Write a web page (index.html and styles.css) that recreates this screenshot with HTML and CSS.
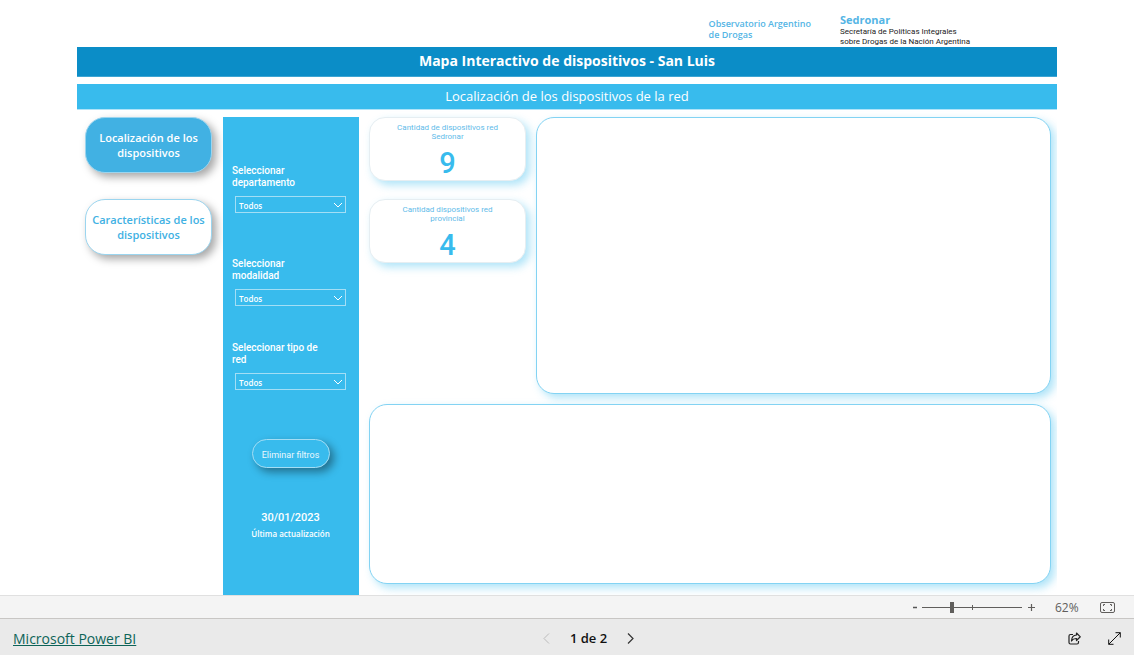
FILE: index.html
```html
<!DOCTYPE html>
<html lang="es">
<head>
<meta charset="utf-8">
<meta name="viewport" content="width=device-width, initial-scale=1">
<title>Mapa Interactivo de dispositivos - San Luis</title>
<link rel="stylesheet" href="styles.css">
</head>
<body>
<main class="report">
  <header class="brands">
    <p class="brand-oad">Observatorio Argentino<br>de Drogas</p>
    <div class="brand-sedronar">
      <p class="brand-name">Sedronar</p>
      <p class="brand-text">Secretaría de Políticas Integrales<br>sobre Drogas de la Nación Argentina</p>
    </div>
  </header>
  <h1 class="title">Mapa Interactivo de dispositivos - San Luis</h1>
  <h2 class="subtitle">Localización de los dispositivos de la red</h2>
  <div class="content">
    <nav class="tabs">
      <button class="tab tab-active" type="button">Localización de los dispositivos</button>
      <button class="tab" type="button">Características de los dispositivos</button>
    </nav>
    <aside class="filters">
      <div class="filter filter-wide">
        <label class="filter-label" for="departamento">Seleccionar departamento</label>
        <div class="dropdown">
          <select class="dropdown-select" id="departamento"><option>Todos</option></select>
          <svg class="dropdown-arrow" viewBox="0 0 10 6" aria-hidden="true"><path d="M1 1l4 4 4-4"/></svg>
        </div>
      </div>
      <div class="filter">
        <label class="filter-label" for="modalidad">Seleccionar modalidad</label>
        <div class="dropdown">
          <select class="dropdown-select" id="modalidad"><option>Todos</option></select>
          <svg class="dropdown-arrow" viewBox="0 0 10 6" aria-hidden="true"><path d="M1 1l4 4 4-4"/></svg>
        </div>
      </div>
      <div class="filter">
        <label class="filter-label" for="red">Seleccionar tipo de red</label>
        <div class="dropdown">
          <select class="dropdown-select" id="red"><option>Todos</option></select>
          <svg class="dropdown-arrow" viewBox="0 0 10 6" aria-hidden="true"><path d="M1 1l4 4 4-4"/></svg>
        </div>
      </div>
      <button class="clear" type="button">Eliminar filtros</button>
      <p class="date">30/01/2023</p>
      <p class="date-label">Última actualización</p>
    </aside>
    <div class="panels">
      <section class="stats">
        <div class="stat">
          <h3 class="stat-label">Cantidad de dispositivos red Sedronar</h3>
          <p class="stat-value">9</p>
        </div>
        <div class="stat">
          <h3 class="stat-label">Cantidad dispositivos red provincial</h3>
          <p class="stat-value">4</p>
        </div>
      </section>
      <section class="panel" aria-label="Mapa"></section>
      <section class="panel panel-table" aria-label="Tabla"></section>
    </div>
  </div>
</main>
<div class="zoombar">
  <button class="zoom-step" type="button" aria-label="Alejar"><svg width="6" height="9" viewBox="0 0 6 9"><path d="M1 4.500h4" stroke="#555" stroke-width="1.500"/></svg></button>
  <input class="zoom-range" type="range" min="10" max="190" value="62" aria-label="Zoom">
  <button class="zoom-step" type="button" aria-label="Acercar"><svg width="9" height="9" viewBox="0 0 9 9"><path d="M1 4.500h7M4.500 1v7" stroke="#605e5c" stroke-width="1.200"/></svg></button>
  <span class="zoom-value">62%</span>
  <button class="icon-button" type="button" aria-label="Ajustar a la página">
    <svg width="15" height="11" viewBox="0 0 15 11" fill="none" stroke="#605e5c"><rect x=".5" y=".5" width="14" height="10" rx="1.500"/><path d="M5 2.500H3.500V4M10 2.500h1.500V4M5 8.500H3.500V7M10 8.500h1.500V7"/></svg>
  </button>
</div>
<footer class="footer">
  <a class="footer-link" href="#">Microsoft Power BI</a>
  <div class="pager">
    <button class="icon-button" type="button" aria-label="Página anterior" disabled><svg width="7" height="11" viewBox="0 0 7 11" fill="none" stroke="#bbb"><path d="M6 .5l-5 5 5 5"/></svg></button>
    <span class="pager-text">1 de 2</span>
    <button class="icon-button" type="button" aria-label="Página siguiente"><svg width="7" height="11" viewBox="0 0 7 11" fill="none" stroke="#333" stroke-width="1.200"><path d="M1 .5l5 5-5 5"/></svg></button>
  </div>
  <div class="actions">
    <button class="icon-button" type="button" aria-label="Compartir"><svg width="13" height="13" viewBox="0 0 13 13" fill="none" stroke="#222" stroke-width="1.200" stroke-linejoin="round"><path d="M5 2.500H2.500a1.500 1.500 0 0 0-1.500 1.500v6.500A1.500 1.500 0 0 0 2.500 12H9a1.500 1.500 0 0 0 1.500-1.500V9"/><path d="M8.500 1L12.300 4.800 8.500 8.500V6.500C6 6.300 4.600 7.300 3.500 9 3.600 5.500 5.300 3.200 8.500 3z"/></svg></button>
    <button class="icon-button" type="button" aria-label="Pantalla completa"><svg width="13" height="13" viewBox="0 0 13 13" fill="none" stroke="#111"><path d="M.7 12.300L12.300.7M7.500.7h4.800v4.800M.7 7.500v4.800h4.800"/></svg></button>
  </div>
</footer>
</body>
</html>
```
FILE: styles.css
```css
* { box-sizing: border-box; }

body {
  margin: 0;
  min-height: 100vh;
  display: flex;
  flex-direction: column;
  background: #fff;
  font-family: "Open Sans", "Noto Sans", sans-serif;
}

h1, h2, h3, p { margin: 0; }

button {
  font-family: inherit;
  cursor: pointer;
}

.report {
  flex: 1;
  display: flex;
  flex-direction: column;
  width: 100%;
  max-width: 980px;
  margin: 0 auto;
  overflow: hidden;
}

.brands {
  display: flex;
  justify-content: flex-end;
  gap: 29px;
  height: 47px;
  padding: 12px 87px 0 0;
}

.brand-oad {
  padding-top: 6px;
  color: #54b5e5;
  font: 600 9px/11px "Open Sans", sans-serif;
}

.brand-name {
  color: #54b5e5;
  font-size: 11px;
  font-weight: 700;
  line-height: 15px;
}

.brand-text {
  color: #222;
  font: 400 8px/10px Roboto, sans-serif;
}

.title {
  height: 30px;
  background: #0b8dc7;
  border-bottom: 1px solid #3da5d3;
  color: #fff;
  font-size: 14px;
  font-weight: 700;
  line-height: 28px;
  text-align: center;
}

.subtitle {
  height: 26px;
  margin-top: 7px;
  background: #38bbed;
  border-bottom: 1px solid #b0e3f8;
  color: #fff;
  font-size: 13px;
  font-weight: 400;
  line-height: 25px;
  text-align: center;
}

.content {
  flex: 1;
  display: grid;
  grid-template-columns: 128px 136px minmax(0, 1fr);
  gap: 10px;
  padding: 7px 6px 0 8px;
}

.tabs {
  display: flex;
  flex-direction: column;
  gap: 26px;
  padding-right: 1px;
}

.tab {
  height: 56px;
  padding: 0 5px;
  border: 1px solid #9bd5ef;
  border-radius: 20px;
  background: #fff;
  box-shadow: 4px 4px 8px rgba(0, 0, 0, .35);
  color: #41b1e3;
  font-size: 11px;
  font-weight: 600;
  line-height: 15px;
}

.tab-active {
  background: #41b1e3;
  color: #fff;
}

.filters {
  display: flex;
  flex-direction: column;
  padding: 48px 10px 0 9px;
  background: #38bbed;
  color: #fff;
  font-family: Roboto, sans-serif;
}

.filter { margin-bottom: 36px; }

.filter-wide { margin-bottom: 45px; }

.filter-label {
  display: block;
  width: 96px;
  font-size: 10px;
  font-weight: 500;
  line-height: 12px;
}

.dropdown {
  position: relative;
  margin: 7px 3px 0;
}

.dropdown-select {
  display: block;
  width: 100%;
  height: 17px;
  padding: 2px 3px 0;
  border: 1px solid #a3def5;
  border-radius: 0;
  background: transparent;
  color: #fff;
  font: 600 8px/14px "Open Sans", sans-serif;
  appearance: none;
}

.dropdown-arrow {
  position: absolute;
  top: 6px;
  right: 3px;
  width: 10px;
  height: 6px;
  fill: none;
  stroke: #fff;
  pointer-events: none;
}

.clear {
  align-self: center;
  width: 78px;
  height: 29px;
  margin-top: 13px;
  padding: 2px 0 0;
  border: 1px solid #a3def5;
  border-radius: 15px;
  background: #38bbed;
  box-shadow: 4px 4px 8px rgba(0, 0, 0, .4);
  color: #eaf8fd;
  font-size: 9px;
}

.date {
  margin-top: 43px;
  font-size: 11px;
  font-weight: 500;
  line-height: 14px;
  text-align: center;
}

.date-label {
  margin-top: 3px;
  font: 600 8px/12px "Open Sans", sans-serif;
  text-align: center;
}

.panels {
  display: grid;
  grid-template-columns: 157px minmax(0, 1fr);
  grid-template-rows: minmax(277px, 20fr) minmax(180px, 13fr);
  gap: 10px;
  padding-bottom: 11px;
}

.stats {
  display: flex;
  flex-direction: column;
  gap: 18px;
}

.stat {
  height: 64px;
  padding: 5px 20px 0;
  border: 1px solid #e6eef2;
  border-radius: 16px;
  background: #fff;
  box-shadow: 4px 4px 8px rgba(56, 187, 237, .4);
  color: #38bbed;
  font-family: Roboto, sans-serif;
  text-align: center;
}

.stat-label {
  color: #5fbbe9;
  font-size: 8px;
  font-weight: 400;
  line-height: 9px;
}

.stat-value {
  margin-top: 6px;
  font-size: 29px;
  font-weight: 500;
  line-height: 32px;
}

.panel {
  border: 1px solid #83d3f3;
  border-radius: 18px;
  background: #fff;
  box-shadow: 4px 4px 8px rgba(56, 187, 237, .4);
}

.panel-table { grid-column: 1 / -1; }

.zoombar {
  display: flex;
  align-items: center;
  justify-content: flex-end;
  height: 23px;
  padding-right: 19px;
  border-top: 1px solid #e0e0e0;
  background: #f4f4f4;
}

.zoom-step {
  display: flex;
  padding: 0;
  border: 0;
  background: none;
}

.zoom-range {
  width: 100px;
  height: 12px;
  margin: 0 5px 0 4px;
  background:
    linear-gradient(#605e5c, #605e5c) 50% 50% / 1px 5px no-repeat,
    linear-gradient(#605e5c, #605e5c) 0 50% / 100% 1px no-repeat;
  appearance: none;
}

.zoom-range::-webkit-slider-thumb {
  width: 4px;
  height: 11px;
  background: #605e5c;
  appearance: none;
}

.zoom-value {
  width: 64px;
  padding-left: 19px;
  color: #605e5c;
  font-size: 12px;
}

.icon-button {
  display: flex;
  padding: 0;
  border: 0;
  background: none;
}

.footer {
  display: grid;
  grid-template-columns: 1fr auto 1fr;
  align-items: center;
  height: 37px;
  padding: 2px 13px 0;
  border-top: 1px solid #c8c6c4;
  background: #eaeaea;
}

.footer-link {
  justify-self: start;
  color: #0d6458;
  font-size: 14px;
}

.pager {
  display: flex;
  align-items: center;
  gap: 20px;
  margin-left: 43px;
}

.pager-text {
  color: #111;
  font-size: 13px;
  font-weight: 600;
}

.actions {
  display: flex;
  justify-content: flex-end;
  gap: 27px;
}
```
